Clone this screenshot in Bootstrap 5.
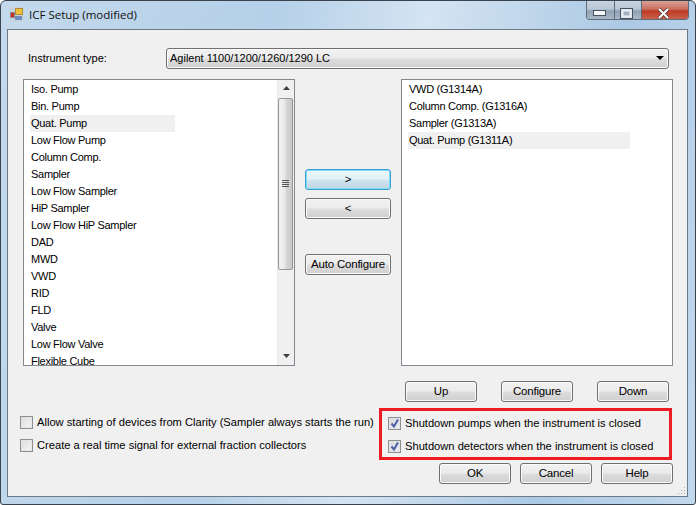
<!DOCTYPE html>
<html lang="en">
<head>
<meta charset="UTF-8">
<title>ICF Setup (modified)</title>
<link href="https://cdn.jsdelivr.net/npm/bootstrap@5.3.0/dist/css/bootstrap.min.css" rel="stylesheet">
<style>
html, body { margin: 0; background: #fff; }
body { width: 696px; height: 505px; overflow: hidden; font-family: "Liberation Sans", sans-serif; font-size: 11px; color: #000; }
.win-frame { width: 696px; height: 505px; border: 1px solid #38434e; border-radius: 6px 6px 3px 3px; padding: 0 7px 7px 6px; background: linear-gradient(100deg, #c4d9ec 0%, #b5d0e8 35%, #d4e4f2 55%, #acc9e4 80%, #c3d9ed 100%); position: relative; }
.win-title { height: 28px; font-family: "Open Sans", sans-serif; font-size: 11.5px; color: #111; }
.win-title svg { margin: 6px 5px 0 2px; }
.win-title span { margin-top: 5px; }
.win-controls { position: absolute; top: 0; right: 6px; height: 19px; border: 1px solid #5d6a78; border-top: 0; border-radius: 0 0 4px 4px; overflow: hidden; }
.win-ctl { height: 18px; display: flex; align-items: center; justify-content: center; background: linear-gradient(#c6d3e0 0%, #b8c7d6 45%, #8fa2b5 55%, #a8b8c8 100%); border-right: 1px solid #5d6a78; }
.win-min { width: 28px; }
.win-max { width: 27px; }
.win-close { width: 46px; border-right: 0; background: linear-gradient(#d9a297 0%, #c9705f 45%, #bf3a24 55%, #c9604c 100%); }
.client { height: 469px; border: 1px solid #6d7a88; background: #f0f0f0; padding: 18px 14px 0 15px; position: relative; }
.ctl-btn { width: 72px; height: 21px; padding: 0; font-size: 11.5px; letter-spacing: -0.2px; line-height: 18px; color: #000; border: 1px solid #707070; border-radius: 3px; background: linear-gradient(#f2f2f2 0%, #ebebeb 48%, #dddddd 52%, #cfcfcf 100%); box-shadow: inset 0 0 0 1px #fbfbfb; }
.ctl-btn.wide { width: 86px; }
.ctl-btn.focused { border-color: #3c9fd0; box-shadow: inset 0 0 0 1px #7fdcf8; background: linear-gradient(#eaf6fb 0%, #e2f1f8 48%, #cfe3ee 52%, #bcd6e4 100%); }
.type-row { height: 21px; }
.type-label { width: 143px; padding-left: 5px; }
.type-select { width: 503px; height: 21px; padding-left: 3px; border: 1px solid #707070; border-radius: 3px; background: linear-gradient(#f2f2f2 0%, #ebebeb 48%, #dddddd 52%, #cfcfcf 100%); box-shadow: inset 0 0 0 1px #fbfbfb; }
.type-arrow { width: 0; height: 0; margin-right: 4px; border-left: 4px solid transparent; border-right: 4px solid transparent; border-top: 4px solid #000; }
.lists-row { margin-top: 10px; height: 287px; }
.dev-list { width: 272px; height: 287px; overflow: hidden; background: #fff; border: 1px solid #828790; border-radius: 0; padding-top: 1px; }
.dev-list .list-group-item { border: 0; border-radius: 0; padding: 0; height: 17px; line-height: 16px; font-size: 11px; letter-spacing: -0.28px; background: transparent; color: #000; white-space: nowrap; }
.dev-item { display: block; height: 17px; padding-left: 1px; }
.dev-list.left-list { padding-left: 6px; }
.dev-list.right-list { padding-left: 6px; }
.left-list .dev-item.sel { width: 145px; background: #f0f0f0; }
.right-list .dev-item.sel { width: 222px; background: #f0f0f0; }
.scroll-col { width: 17px; height: 285px; flex: none; background: #f0f0f0; border-left: 1px solid #e8e8e8; position: absolute; right: 0; top: 0; }
.scroll-arrow { height: 17px; }
.scroll-thumb { height: 172px; margin: 1px 1px 0 0; border: 1px solid #979797; border-radius: 2px; background: linear-gradient(90deg, #f2f2f2 0%, #e8e8e8 45%, #d6d6d6 55%, #c9c9c9 100%); }
.mid-col { width: 86px; margin: 0 10px; padding-top: 90px; }
.move-gap { margin-top: 8px; }
.auto-gap { margin-top: 35px; }
.order-row { margin-top: 15px; height: 21px; padding-left: 382px; gap: 24px; }
.opts-row { margin-top: 6px; height: 52px; margin-left: -3px; font-size: 11.15px; }
.opts-left { width: 359px; padding-top: 3px; white-space: nowrap; }
.opt-line { height: 23px; }
.opt-box { width: 13px; height: 13px; flex: none; margin-right: 4px; border: 1px solid #8e8f8f; background: linear-gradient(135deg, #dcdcdc, #f6f6f6); box-shadow: inset 0 0 0 1px #e4e4e4; }
.opts-right { width: 293px; height: 52px; border: 3px solid #ed1c24; padding: 1px 0 0 6px; white-space: nowrap; }
.opts-right .opt-box { background: linear-gradient(135deg, #d5d8dc, #f0f2f5); }
.action-row { margin-top: 3px; gap: 9px; padding-left: 416px; }
.action-row .ctl-btn { width: 73px; }
.size-grip { position: absolute; right: 1px; bottom: 1px; }
</style>
</head>
<body>
<div class="win-frame d-flex flex-column">
  <div class="win-title d-flex align-items-start">
    <svg width="15" height="15" viewBox="0 0 15 15"><rect x="0.5" y="0.5" width="14" height="14" fill="#c8ccd2" opacity=".55"/><rect x="1.5" y="5.5" width="4" height="5" fill="#d02a20" stroke="#8a8f96"/><rect x="6.5" y="1.5" width="7" height="6" fill="#f0c040" stroke="#b08a30"/><rect x="6.5" y="9.5" width="6" height="3" fill="#5a8fd8" stroke="#7a8ca8"/></svg>
    <span>ICF Setup (modified)</span>
    <div class="win-controls d-flex">
      <div class="win-ctl win-min"><svg width="13" height="6" viewBox="0 0 13 6"><rect x="0.5" y="0.5" width="12" height="5" fill="#f4f6f8" stroke="#46525e"/></svg></div>
      <div class="win-ctl win-max"><svg width="13" height="11" viewBox="0 0 13 11"><rect x="0.5" y="0.5" width="12" height="10" fill="#dfe6ec" stroke="#46525e"/><rect x="3" y="3" width="7" height="5" fill="#9fb0c0" stroke="#f0f4f8"/></svg></div>
      <div class="win-ctl win-close"><svg width="13" height="11" viewBox="0 0 13 11"><path d="M2 1 L11 10 M11 1 L2 10" stroke="#4a3a38" stroke-width="3.4"/><path d="M2 1 L11 10 M11 1 L2 10" stroke="#fff" stroke-width="2"/></svg></div>
    </div>
  </div>
  <div class="client">
    <div class="type-row d-flex align-items-center">
      <div class="type-label">Instrument type:</div>
      <div class="type-select d-flex align-items-center justify-content-between">
        <span>Agilent 1100/1200/1260/1290 LC</span><span class="type-arrow"></span>
      </div>
    </div>
    <div class="lists-row d-flex">
      <div class="list-group dev-list left-list position-relative">
        <div class="list-group-item"><span class="dev-item">Iso. Pump</span></div>
        <div class="list-group-item"><span class="dev-item">Bin. Pump</span></div>
        <div class="list-group-item"><span class="dev-item sel">Quat. Pump</span></div>
        <div class="list-group-item"><span class="dev-item">Low Flow Pump</span></div>
        <div class="list-group-item"><span class="dev-item">Column Comp.</span></div>
        <div class="list-group-item"><span class="dev-item">Sampler</span></div>
        <div class="list-group-item"><span class="dev-item">Low Flow Sampler</span></div>
        <div class="list-group-item"><span class="dev-item">HiP Sampler</span></div>
        <div class="list-group-item"><span class="dev-item">Low Flow HiP Sampler</span></div>
        <div class="list-group-item"><span class="dev-item">DAD</span></div>
        <div class="list-group-item"><span class="dev-item">MWD</span></div>
        <div class="list-group-item"><span class="dev-item">VWD</span></div>
        <div class="list-group-item"><span class="dev-item">RID</span></div>
        <div class="list-group-item"><span class="dev-item">FLD</span></div>
        <div class="list-group-item"><span class="dev-item">Valve</span></div>
        <div class="list-group-item"><span class="dev-item">Low Flow Valve</span></div>
        <div class="list-group-item"><span class="dev-item">Flexible Cube</span></div>
        <div class="scroll-col d-flex flex-column">
          <div class="scroll-arrow d-flex align-items-center justify-content-center"><svg width="7" height="4" viewBox="0 0 7 4"><path d="M3.5 0 L7 4 H0 Z" fill="#404040"/></svg></div>
          <div class="scroll-thumb d-flex align-items-center justify-content-center"><svg width="7" height="7" viewBox="0 0 7 7"><path d="M0 .5H7M0 2.5H7M0 4.5H7M0 6.5H7" stroke="#555"/></svg></div>
          <div class="scroll-arrow mt-auto d-flex align-items-center justify-content-center"><svg width="7" height="4" viewBox="0 0 7 4"><path d="M0 0 H7 L3.5 4 Z" fill="#404040"/></svg></div>
        </div>
      </div>
      <div class="mid-col d-flex flex-column">
        <button type="button" class="btn ctl-btn wide focused">&gt;</button>
        <button type="button" class="btn ctl-btn wide move-gap">&lt;</button>
        <button type="button" class="btn ctl-btn wide auto-gap">Auto Configure</button>
      </div>
      <div class="list-group dev-list right-list">
        <div class="list-group-item"><span class="dev-item">VWD (G1314A)</span></div>
        <div class="list-group-item"><span class="dev-item">Column Comp. (G1316A)</span></div>
        <div class="list-group-item"><span class="dev-item">Sampler (G1313A)</span></div>
        <div class="list-group-item"><span class="dev-item sel">Quat. Pump (G1311A)</span></div>
      </div>
    </div>
    <div class="order-row d-flex">
      <button type="button" class="btn ctl-btn">Up</button>
      <button type="button" class="btn ctl-btn">Configure</button>
      <button type="button" class="btn ctl-btn">Down</button>
    </div>
    <div class="opts-row d-flex">
      <div class="opts-left">
        <div class="opt-line d-flex align-items-center"><span class="opt-box"></span><span>Allow starting of devices from Clarity (Sampler always starts the run)</span></div>
        <div class="opt-line d-flex align-items-center"><span class="opt-box"></span><span>Create a real time signal for external fraction collectors</span></div>
      </div>
      <div class="opts-right">
        <div class="opt-line d-flex align-items-center"><span class="opt-box d-flex"><svg width="11" height="11" viewBox="0 0 11 11"><path d="M2.5 5.5 L5 8.5 L9 1.5" fill="none" stroke="#4a5fa8" stroke-width="2"/></svg></span><span>Shutdown pumps when the instrument is closed</span></div>
        <div class="opt-line d-flex align-items-center"><span class="opt-box d-flex"><svg width="11" height="11" viewBox="0 0 11 11"><path d="M2.5 5.5 L5 8.5 L9 1.5" fill="none" stroke="#4a5fa8" stroke-width="2"/></svg></span><span>Shutdown detectors when the instrument is closed</span></div>
      </div>
    </div>
    <div class="action-row d-flex">
      <button type="button" class="btn ctl-btn">OK</button>
      <button type="button" class="btn ctl-btn">Cancel</button>
      <button type="button" class="btn ctl-btn">Help</button>
    </div>
    <svg class="size-grip" width="9" height="9" viewBox="0 0 9 9"><path d="M7 1h1v1H7zM4 4h1v1H4zM7 4h1v1H7zM1 7h1v1H1zM4 7h1v1H4zM7 7h1v1H7z" fill="#a8a8a8"/></svg>
  </div>
</div>
<script src="https://cdn.jsdelivr.net/npm/bootstrap@5.3.0/dist/js/bootstrap.bundle.min.js"></script>
</body>
</html>
